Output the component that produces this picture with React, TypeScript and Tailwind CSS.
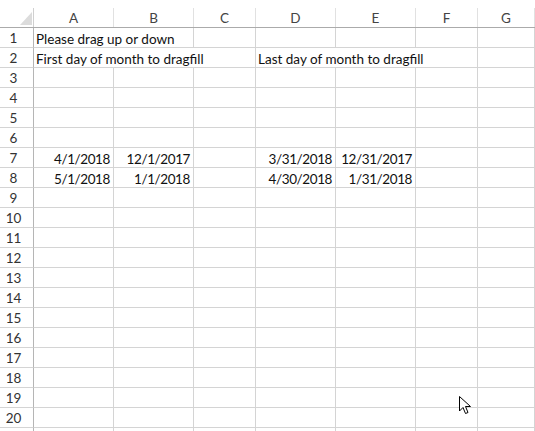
const cols = [
  { name: "A", w: 80 },
  { name: "B", w: 80 },
  { name: "C", w: 62 },
  { name: "D", w: 80 },
  { name: "E", w: 80 },
  { name: "F", w: 62 },
  { name: "G", w: 57 },
];

type Cell = { span?: number; text?: string; right?: boolean };

// rows keyed by number; default is seven empty cells
const data: Record<number, Cell[]> = {
  1: [{ span: 2, text: "Please drag up or down" }, {}, {}, {}, {}, {}],
  2: [{ span: 3, text: "First day of month to dragfill" }, { span: 3, text: "Last day of month to dragfill" }, {}],
  7: [{ text: "4/1/2018", right: true }, { text: "12/1/2017", right: true }, {}, { text: "3/31/2018", right: true }, { text: "12/31/2017", right: true }, {}, {}],
  8: [{ text: "5/1/2018", right: true }, { text: "1/1/2018", right: true }, {}, { text: "4/30/2018", right: true }, { text: "1/31/2018", right: true }, {}, {}],
};

const Row = ({ n }: { n: number }) => {
  const cells = data[n] ?? cols.map(() => ({}));
  let ci = 0;
  return (
    <div className="flex h-[20px]">
      <div className="w-[34px] h-full shrink-0 border-r border-b border-r-[#b5b5b5] border-b-[#d4d4d4] flex items-center justify-center pr-[6px] pt-[2px] text-[#333] bg-white">
        {n <= 20 ? n : ""}
      </div>
      {cells.map((c, i) => {
        const span = c.span ?? 1;
        const w = cols.slice(ci, ci + span).reduce((s, x) => s + x.w, 0);
        ci += span;
        return (
          <div
            key={i}
            style={{ width: w }}
            className={`h-full shrink-0 border-r border-b border-[#d4d4d4] flex items-center whitespace-nowrap px-[2px] pt-[3px] ${c.right ? "justify-end tracking-[-0.4px] pr-[3px]" : "justify-start"}`}
          >
            {c.text}
          </div>
        );
      })}
    </div>
  );
};

export default function App() {
  const rows = Array.from({ length: 21 }, (_, i) => i + 1);
  return (
    <div className="relative w-[535px] h-[431px] overflow-hidden bg-white text-[13.5px] text-[#111]" style={{ fontFamily: "Lato, 'Open Sans', sans-serif" }}>
      <div className="h-[8px]" />
      <div className="flex h-[20px] border-b border-[#ababab]">
        <div className="w-[34px] shrink-0 border-r border-[#d0d0d0] relative">
          <svg width="34" height="19" className="absolute left-0 top-0">
            <polygon points="20,17 32,17 32,4" fill="#dcdcdc" />
          </svg>
        </div>
        {cols.map((c) => (
          <div key={c.name} style={{ width: c.w }} className="shrink-0 border-r border-[#e1e1e1] flex items-center justify-center pt-[2px] text-[#444]">
            {c.name}
          </div>
        ))}
      </div>
      {rows.map((n) => (
        <Row key={n} n={n} />
      ))}
      <svg width="14" height="20" viewBox="0 0 14 20" className="absolute left-[459px] top-[396px]">
        <path d="M0.5 0.5 L0.5 15 L4 11.5 L6.5 17.5 L9 16.5 L6.5 10.5 L11.5 10.5 Z" fill="#fff" stroke="#000" strokeWidth="1" strokeLinejoin="miter" />
      </svg>
    </div>
  );
}
